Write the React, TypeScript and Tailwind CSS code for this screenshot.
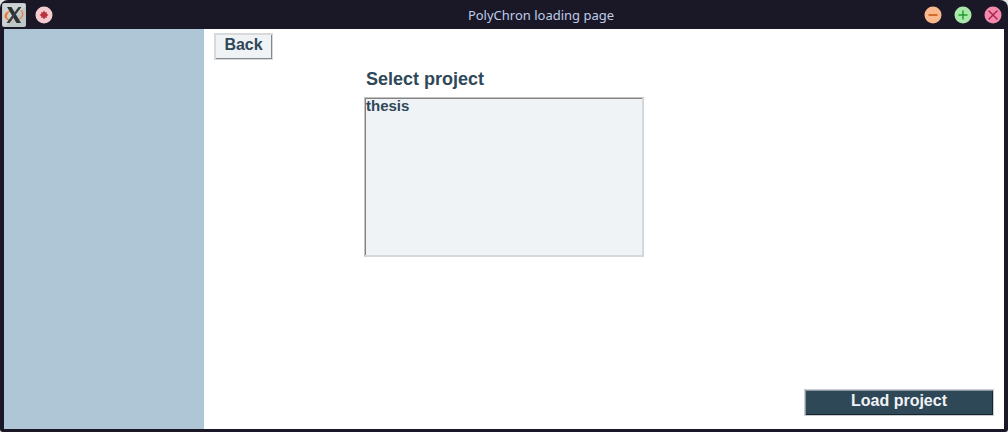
import React from "react";

function XLogo() {
  return (
    <svg viewBox="0 0 24 24" className="h-6 w-6" aria-hidden="true">
      <rect width="24" height="24" rx="2" fill="#bfc6c8" />
      <path d="M1 1h22v3L4 23H1z" fill="#cdd2d3" />
      <path d="M11 7C6 7.500 2.500 10 2.500 13c0 3.500 4.500 5.500 9.500 5.200C7.500 17.500 4.800 15.500 5 13c.2-2.500 2.500-4.800 6-6z" fill="#f07a35" />
      <path d="M17 6.500c3.500.6 5 2.800 4.300 5.500-.9 3.500-4.800 5.800-9.300 6.200 4-1.200 7-3.200 7.800-6 .6-2.400-.5-4.400-2.800-5.700z" fill="#ee8040" />
      <path d="M5 4h4.500L19 20h-4.500z" fill="#2b3234" />
      <path d="M16.500 4h3L7.500 20h-3z" fill="#343b3d" />
    </svg>
  );
}

function Pin() {
  return (
    <svg viewBox="0 0 18 18" className="h-[18px] w-[18px]" aria-hidden="true">
      <circle cx="9" cy="9" r="8.500" fill="#f5cdd0" />
      <path d="M9 4.500l1.200 1.900 1.700-.3-.3 1.700L13.500 9l-1.900 1.200.3 1.700-1.700-.3L9 13.500l-1.200-1.900-1.700.3.3-1.700L4.500 9l1.900-1.200-.3-1.700 1.700.3z" fill="#b9323c" />
    </svg>
  );
}

function WindowButton({ label, fill, stroke, path }: { label: string; fill: string; stroke: string; path: string }) {
  return (
    <button type="button" aria-label={label} className="block h-[18px] w-[18px]">
      <svg viewBox="0 0 18 18" className="block h-[18px] w-[18px]" aria-hidden="true">
        <circle cx="9" cy="9" r="8.500" fill={fill} />
        <path d={path} fill="none" stroke={stroke} strokeWidth="1.500" strokeLinecap="round" />
      </svg>
    </button>
  );
}

export default function App() {
  return (
    <div className="bg-[#e3e3e6]">
      <div className="flex min-h-screen flex-col overflow-hidden rounded-t-[8px] rounded-b-[3px] bg-[#1a1826] px-1 pb-[3px] font-['Liberation_Sans',Arial,sans-serif] text-[#2f4858]">
        <header className="-mx-1 grid h-[29px] grid-cols-[1fr_auto_1fr] items-center pr-[6px] pl-[2px]">
          <div className="flex items-center gap-[9px]">
            <XLogo />
            <button type="button" aria-label="Pin window">
              <Pin />
            </button>
          </div>
          <h1 className="pt-px pl-[78px] font-['Noto_Sans',sans-serif] text-[13px] leading-5 text-[#bfcbea]">
            PolyChron loading page
          </h1>
          <div className="flex items-center justify-end gap-3">
            <WindowButton label="Minimize" fill="#fab88d" stroke="#c9500f" path="M5 9h8" />
            <WindowButton label="Maximize" fill="#a8e8a9" stroke="#239a32" path="M5 9h8M9 5v8" />
            <WindowButton label="Close" fill="#f28bab" stroke="#ad2350" path="M5 5l8 8M13 5l-8 8" />
          </div>
        </header>

        <div className="flex flex-1">
          <aside className="w-1/5 bg-[#aec6d6]" />
          <main className="flex flex-1 flex-col items-start bg-white pt-1 pr-[10px] pb-[13px] pl-[10px]">
            <button
              type="button"
              className="h-[27px] w-[59px] border border-[#d9d9d9] bg-[#eff3f6] pb-1 text-[16px] leading-5 font-bold shadow-[inset_1px_1px_0_#d9d9d9,inset_-1px_-1px_0_#82898e]"
            >
              Back
            </button>

            <div className="ml-[150px] flex w-[280px] flex-col pt-2">
              <label htmlFor="projects" className="pl-[2px] text-[18px] leading-[22px] font-bold">
                Select project
              </label>
              <select
                id="projects"
                size={8}
                className="mt-[7px] block h-[160px] w-full appearance-none overflow-auto border border-t-[#c3c3c3] border-r-[#d5d8da] border-b-[#d5d8da] border-l-[#c3c3c3] bg-[#eff3f6] bg-none p-px text-[15px] font-bold shadow-[inset_-1px_-1px_0_#d5d8da,inset_1px_1px_0_#828282] outline-none"
              >
                <option className="flex h-[12px] min-h-0 items-center p-0 text-[15px] leading-[12px] font-bold">thesis</option>
              </select>
            </div>

            <button
              type="button"
              className="mt-auto h-[27px] w-[190px] self-end border border-[#c9cdd0] bg-[#2f4858] pb-1 text-[16px] leading-5 font-bold text-[#eff3f6] shadow-[inset_1px_1px_0_#8b989f,inset_-1px_-1px_0_#17242c]"
            >
              Load project
            </button>
          </main>
        </div>
      </div>
    </div>
  );
}
